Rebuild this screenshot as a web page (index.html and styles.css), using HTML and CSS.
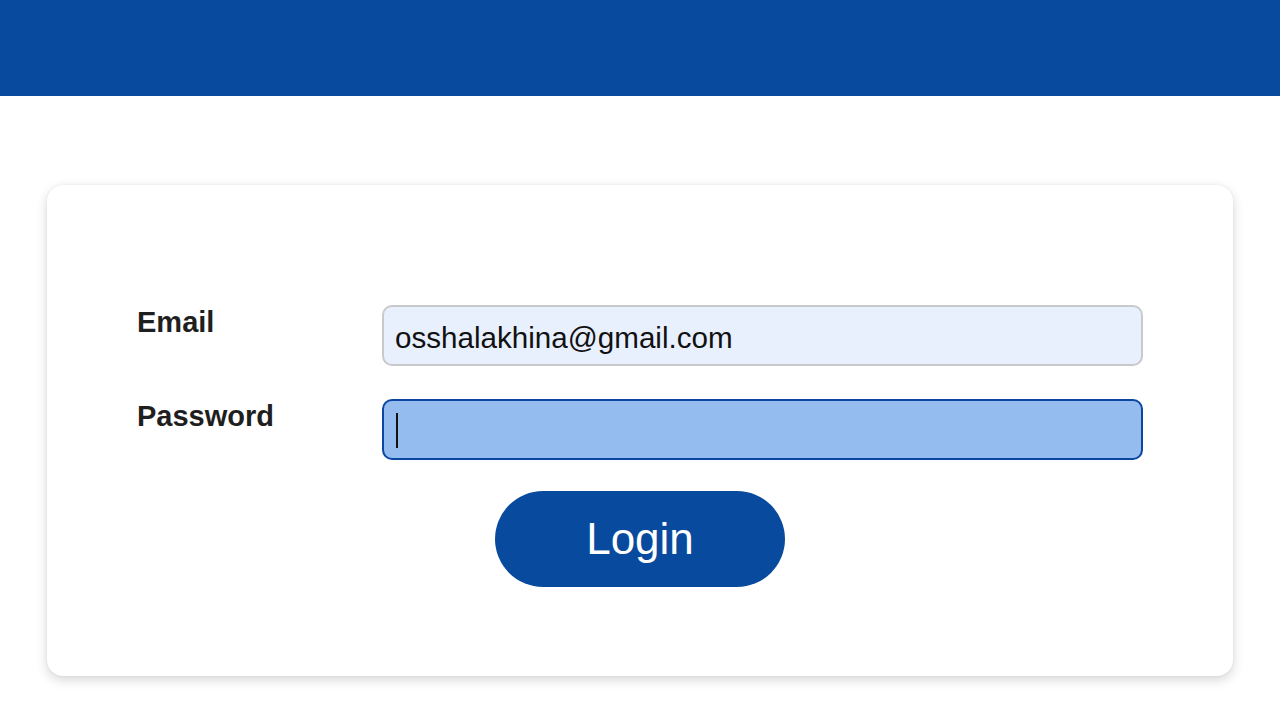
FILE: index.html
```html
<!DOCTYPE html>
<html lang="en">
<head>
<meta charset="utf-8">
<title>Login</title>
<link rel="stylesheet" href="styles.css">
</head>
<body>
<header class="topbar"></header>
<main class="page">
  <form class="card">
    <div class="row">
      <label class="label" for="email">Email</label>
      <div class="field autofill">osshalakhina@gmail.com</div>
    </div>
    <div class="row">
      <label class="label" for="pw">Password</label>
      <div class="field focused"><span class="caret"></span></div>
    </div>
    <div class="actions">
      <button class="btn" type="button">Login</button>
    </div>
  </form>
</main>
</body>
</html>
```
FILE: styles.css
```css
* { box-sizing: border-box; }
html, body { margin: 0; padding: 0; }
body {
  background: #ffffff;
  font-family: "Liberation Sans", Arial, Helvetica, sans-serif;
  color: #1f1f1f;
  width: 1280px;
  height: 720px;
  overflow: hidden;
}
.topbar {
  height: 96px;
  background: #084a9e;
}
.page {
  padding: 89px 47px 0 47px;
}
.card {
  background: #fff;
  border-radius: 16px;
  box-shadow: 0 4px 12px rgba(0,0,0,0.16), 0 0 3px rgba(0,0,0,0.06);
  padding: 120px 90px 89px 90px;
  display: flex;
  flex-direction: column;
  gap: 33px;
}
.row {
  display: grid;
  grid-template-columns: 245px 1fr;
  align-items: start;
}
.label {
  font-weight: bold;
  font-size: 29px;
  line-height: 33px;
  padding-top: 1px;
  color: #1f1f1f;
}
.field {
  height: 61px;
  border-radius: 10px;
  border: 2px solid #c9c9c9;
  font-size: 29.6px;
  line-height: 57px;
  padding: 3px 11px 0 11px;
  color: #111;
  display: flex;
  align-items: center;
}
.autofill { background: #e8f0fe; }
.focused {
  background: #94bcee;
  border-color: #0b47a0;
  padding-top: 0;
}
.caret {
  display: block;
  width: 2px;
  height: 35px;
  background: #111;
  margin-top: 2px;
  margin-left: 1px;
}
.actions {
  display: flex;
  justify-content: center;
  margin-top: -2px;
}
.btn {
  width: 290px;
  height: 96px;
  border: none;
  border-radius: 48px;
  background: #084a9e;
  color: #fff;
  font-family: "Liberation Sans", Arial, Helvetica, sans-serif;
  font-size: 44px;
  padding: 0;
}
```
